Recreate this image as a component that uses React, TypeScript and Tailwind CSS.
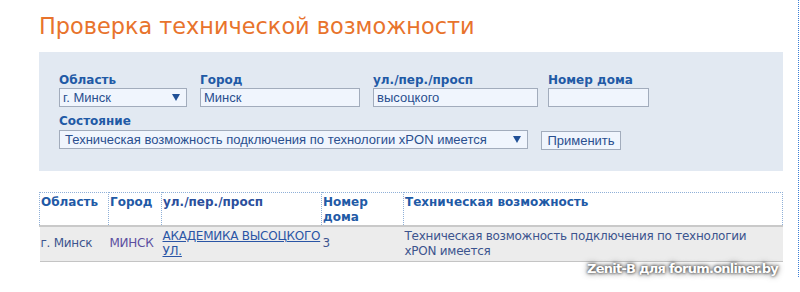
const labelCls = "block text-[12px] font-bold leading-[14px] text-[#1f5aa6] font-['DejaVu_Sans',sans-serif]";
const fieldCls =
  "h-[19px] border border-[#a2acbc] bg-[#f0f5fd] px-[3px] text-[13px] leading-[17px] text-[#2a4f8f] font-['Liberation_Sans',Arial,sans-serif]";

const Caret = () => (
  <svg width="8" height="7" viewBox="0 0 8 7" className="shrink-0">
    <path d="M0 0h8L4 7z" fill="#1f4f96" />
  </svg>
);

const App = () => {
  return (
    <div className="relative h-[292px] w-[800px] bg-white font-['DejaVu_Sans',sans-serif]">
      <div className="h-[277px] w-[799px] border-r border-dotted border-[#3c7fd6] pl-[39px] pr-[15px]">
        <h1 className="pt-[12px] text-[22.4px] leading-[28px] font-normal text-[#e8732c]">
          Проверка технической возможности
        </h1>

        {/* Filter panel */}
        <div className="mt-[12px] h-[119px] w-[744px] bg-[#e2e9f2] pl-[20px] pt-[21px]">
          <div className="flex">
            <div className="w-[141px]">
              <span className={labelCls}>Область</span>
              <div className={`${fieldCls} mt-[1px] flex w-[128px] items-center justify-between pr-[6px]`}>
                <span>г. Минск</span>
                <Caret />
              </div>
            </div>
            <div className="w-[173px]">
              <span className={labelCls}>Город</span>
              <div className={`${fieldCls} mt-[1px] w-[160px]`}>Минск</div>
            </div>
            <div className="w-[175px]">
              <span className={labelCls}>ул./пер./просп</span>
              <div className={`${fieldCls} mt-[1px] w-[165px]`}>высоцкого</div>
            </div>
            <div>
              <span className={labelCls}>Номер дома</span>
              <div className={`${fieldCls} mt-[1px] w-[101px]`} />
            </div>
          </div>
          <div className="mt-[7px]">
            <span className={labelCls}>Состояние</span>
            <div className="mt-[1px] flex items-center">
              <div className={`${fieldCls} flex w-[469px] items-center justify-between pl-[5px] pr-[6px]`}>
                <span>Техническая возможность подключения по технологии xPON имеется</span>
                <Caret />
              </div>
              <button className="ml-[13px] mt-[2px] h-[19px] w-[80px] border border-[#a2acbc] bg-[#f0f5fd] text-center text-[13px] leading-[17px] text-[#2a4f8f] font-['Liberation_Sans',Arial,sans-serif]">
                Применить
              </button>
            </div>
          </div>
        </div>

        {/* Results table */}
        <table className="mt-[21px] w-[744px] border-collapse text-[12px] leading-[15px]">
          <thead>
            <tr className="border-b-2 border-[#c9c9c9] align-top text-left font-bold text-[#1f5aa6]">
              <th className="h-[32px] w-[69px] border-l border-r border-t border-dotted border-[#8fb0d8] px-[1px] pt-[2px]">Область</th>
              <th className="w-[53px] border-r border-t border-dotted border-[#8fb0d8] px-[1px] pt-[2px]">Город</th>
              <th className="w-[160px] border-r border-t border-dotted border-[#8fb0d8] px-[1px] pt-[2px] text-[#2b4f9c]">ул./пер./просп</th>
              <th className="w-[82px] border-r border-t border-dotted border-[#8fb0d8] px-[1px] pt-[2px]">Номер<br />дома</th>
              <th className="border-r border-t border-dotted border-[#8fb0d8] px-[1px] pt-[2px]">Техническая возможность</th>
            </tr>
          </thead>
          <tbody>
            <tr className="h-[35px] border-b border-[#c4c4c4] bg-[#ececec] align-middle tracking-[-0.25px] text-[#3c548e]">
              <td className="px-[1px]">г. Минск</td>
              <td className="px-[1px] text-[#5b4fa0]">МИНСК</td>
              <td className="px-[1px]">
                <a className="text-[#2a55a5] underline" href="#">АКАДЕМИКА ВЫСОЦКОГО УЛ.</a>
              </td>
              <td className="px-[1px]">3</td>
              <td className="px-[1px] pt-[1px]">Техническая возможность подключения по технологии xPON имеется</td>
            </tr>
          </tbody>
        </table>
      </div>

      {/* watermark */}
      <span className="absolute left-[587px] top-[261px] whitespace-nowrap text-[13px] font-bold leading-[16px] tracking-[-0.75px] text-white [text-shadow:0_0_3px_#222,0_0_6px_#555]">
        Zenit-B для forum.onliner.by
      </span>
    </div>
  );
};

export default App;
